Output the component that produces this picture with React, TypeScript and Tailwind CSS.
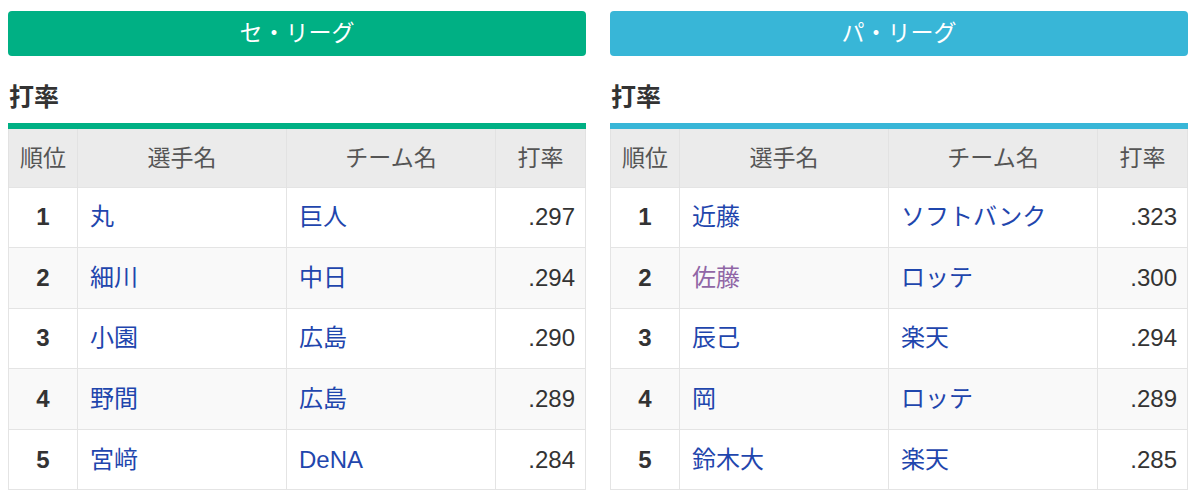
import React from "react";

type Row = { rank: number; name: string; team: string; avg: string; visited?: boolean };

const central: Row[] = [
  { rank: 1, name: "丸", team: "巨人", avg: ".297" },
  { rank: 2, name: "細川", team: "中日", avg: ".294" },
  { rank: 3, name: "小園", team: "広島", avg: ".290" },
  { rank: 4, name: "野間", team: "広島", avg: ".289" },
  { rank: 5, name: "宮﨑", team: "DeNA", avg: ".284" },
];

const pacific: Row[] = [
  { rank: 1, name: "近藤", team: "ソフトバンク", avg: ".323" },
  { rank: 2, name: "佐藤", team: "ロッテ", avg: ".300", visited: true },
  { rank: 3, name: "辰己", team: "楽天", avg: ".294" },
  { rank: 4, name: "岡", team: "ロッテ", avg: ".289" },
  { rank: 5, name: "鈴木大", team: "楽天", avg: ".285" },
];

function LeagueTable({
  title,
  rows,
  pacificLeague,
}: {
  title: string;
  rows: Row[];
  pacificLeague?: boolean;
}) {
  return (
    <div className="flex flex-col">
      <div
        className={
          "mt-[11px] h-[45px] rounded-[4px] flex items-center justify-center text-white text-[23px] " +
          (pacificLeague ? "bg-[#38b6d7]" : "bg-[#00b084]")
        }
      >
        {title}
      </div>
      <h3 className="mt-[26px] mb-[11px] text-[25px] leading-[30px] font-bold text-[#333] pl-[1px]">打率</h3>
      <table className="w-full border-collapse text-[24px]">
        <thead>
          <tr
            className={
              "border-t-[6px] bg-[#ebebeb] text-[#555] text-[23px] " +
              (pacificLeague ? "border-t-[#38b6d7]" : "border-t-[#00b084]")
            }
          >
            <th className="h-[61px] w-[69px] font-normal border-x border-[#e2e2e2]">順位</th>
            <th className="w-[209px] font-normal border-x border-[#e2e2e2]">選手名</th>
            <th className="w-[209px] font-normal border-x border-[#e2e2e2]">チーム名</th>
            <th className="font-normal border-x border-[#e2e2e2]">打率</th>
          </tr>
        </thead>
        <tbody>
          {rows.map((r, i) => (
            <tr key={r.rank} className={i % 2 === 1 ? "bg-[#f9f9f9]" : "bg-white"}>
              <td className="h-[60.6px] text-center font-bold text-[#333] border border-[#e4e4e4]">
                {r.rank}
              </td>
              <td className="px-[12px] border border-[#e4e4e4]">
                <a className={r.visited ? "text-[#9066a6]" : "text-[#1f46ad]"}>{r.name}</a>
              </td>
              <td className="px-[12px] border border-[#e4e4e4]">
                <a className="text-[#1f46ad]">{r.team}</a>
              </td>
              <td className="px-[10px] text-right text-[#333] border border-[#e4e4e4]">{r.avg}</td>
            </tr>
          ))}
        </tbody>
      </table>
    </div>
  );
}

export default function App() {
  return (
    <div
      className="w-[1192px] h-[496px] bg-white grid grid-cols-2 gap-[24px] pl-[8px] pr-[4px]"
      style={{ fontFamily: '"Liberation Sans", "Noto Sans CJK JP", sans-serif' }}
    >
      <LeagueTable title="セ・リーグ" rows={central} />
      <LeagueTable title="パ・リーグ" rows={pacific} pacificLeague />
    </div>
  );
}
